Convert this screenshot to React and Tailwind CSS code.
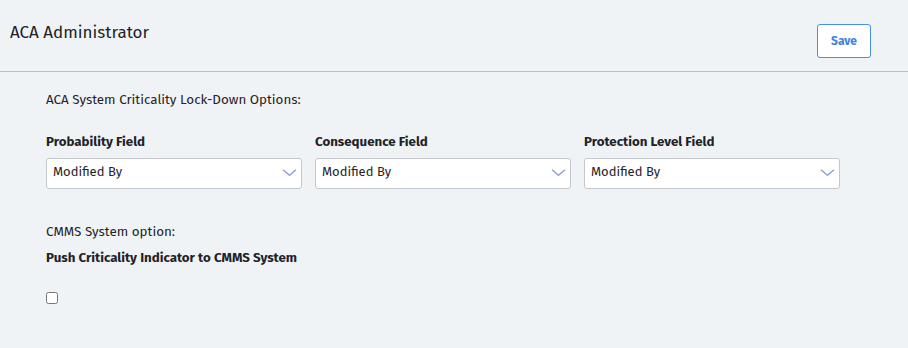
import React from 'react';

const font = { fontFamily: '"Fira Sans", "Noto Sans", "Open Sans", sans-serif' };

const Chevron = () => (
  <svg width="15" height="7" viewBox="0 0 15 7" fill="none" className="shrink-0">
    <path d="M1 0.8l6.5 5.5L14 0.8" stroke="#8c9ad8" strokeWidth="1.3" />
  </svg>
);

const SelectBox = ({ label, value }) => (
  <div className="w-[256px]">
    <div className="text-[13.3px] font-bold text-[#1f2328] h-[18px] leading-[18px]">{label}</div>
    <div className="mt-[7px] h-[31px] bg-white border border-[#c4c7cb] rounded-[3px] flex items-center justify-between pl-[6px] pr-[4px] pb-[3px]">
      <span className="text-[13px] text-[#1f2328]">{value}</span>
      <Chevron />
    </div>
  </div>
);

export default function App() {
  return (
    <div className="w-[908px] h-[348px] bg-[#f0f3f6] text-[#1f2328]" style={font}>
      <div className="h-[72px] border-b border-[#bcc0c4] flex items-start justify-between">
        <h1 className="text-[17px] ml-[10px] mt-[22px] leading-[22px]">ACA Administrator</h1>
        <button className="mt-[24px] mr-[37px] w-[54px] h-[34px] bg-white border border-[#4a8fe9] rounded-[3px] text-[12px] font-bold text-[#3f7fe0]">
          Save
        </button>
      </div>
      <div className="pl-[46px]">
        <div className="mt-[19px] text-[13.4px] h-[18px] leading-[18px]">ACA System Criticality Lock-Down Options:</div>
        <div className="mt-[24px] flex gap-[13px]">
          <SelectBox label="Probability Field" value="Modified By" />
          <SelectBox label="Consequence Field" value="Modified By" />
          <SelectBox label="Protection Level Field" value="Modified By" />
        </div>
        <div className="mt-[34px] text-[13.4px] h-[18px] leading-[18px]">CMMS System option:</div>
        <div className="mt-[8px] text-[13.3px] font-bold h-[18px] leading-[18px]">Push Criticality Indicator to CMMS System</div>
        <input type="checkbox" className="block mt-[25px] w-[12px] h-[12px] m-0" />
      </div>
    </div>
  );
}
